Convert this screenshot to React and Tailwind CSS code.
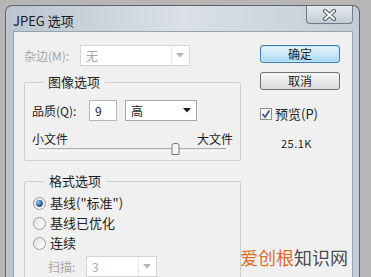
import React from 'react';

const font = { fontFamily: '"Noto Sans CJK SC", "Liberation Sans", sans-serif' };

// small down-pointing triangle used by the combo boxes
const Arrow = ({ color = '#1a1a1a' }) => (
  <svg width="8" height="5" viewBox="0 0 8 5">
    <path d="M0 0 H8 L4 4.5 Z" fill={color} />
  </svg>
);

const Combo = ({ value, disabled, className }) => (
  <div
    className={`flex items-center justify-between h-[21px] pl-[5px] pr-[5px] border bg-white ${
      disabled ? 'border-[#d4d4d4] text-[#a6a6a6]' : 'border-[#a9a9a9] text-[#1e1e1e]'
    } ${className}`}
  >
    <span className="text-[12px] leading-none">{value}</span>
    <div className={`flex items-center h-full pl-[4px] ${disabled ? 'border-l border-[#e6e6e6]' : ''}`}>
      <Arrow color={disabled ? '#b5b5b5' : '#1a1a1a'} />
    </div>
  </div>
);

const Radio = ({ checked }) => (
  <svg width="13" height="13" viewBox="0 0 13 13">
    <defs>
      <linearGradient id="rg" x1="0" y1="0" x2="1" y2="1">
        <stop offset="0" stopColor="#e0e0e0" />
        <stop offset="1" stopColor="#ffffff" />
      </linearGradient>
      <radialGradient id="rd" cx="0.35" cy="0.35" r="0.7">
        <stop offset="0" stopColor="#9fd0ef" />
        <stop offset="0.6" stopColor="#2f6ea3" />
        <stop offset="1" stopColor="#1c4c78" />
      </radialGradient>
    </defs>
    <circle cx="6.5" cy="6.5" r="6" fill="url(#rg)" stroke="#9a9a9a" strokeWidth="1" />
    {checked && <circle cx="6.5" cy="6.5" r="3.4" fill="url(#rd)" />}
  </svg>
);

const Legend = ({ children }) => (
  <legend className="ml-[11px] px-[5px] text-[13px] leading-[16px] text-[#1e1e1e]">{children}</legend>
);

export default function App() {
  return (
    <div className="relative w-[371px] h-[277px] overflow-hidden bg-[#b6b6b6]" style={font}>
      {/* window */}
      <div className="mt-[5px] ml-[5px] w-[355px] h-[272px] flex flex-col rounded-t-[7px] border border-b-0 border-[#5a6672] bg-linear-to-r from-[#bac5d0] via-[#dae0e6] to-[#c3ccd6]">
        {/* title bar */}
        <div className="h-[27px] flex items-start justify-between">
          <span className="pl-[7px] pt-[7px] text-[13px] leading-[16px] text-[#1a1a1a]">JPEG 选项</span>
          <div className="mr-[6px] w-[47px] h-[18px] flex items-center justify-center rounded-b-[4px] border border-t-0 border-[#6f7b88] bg-linear-to-b from-[#e6eaee] to-[#c2cbd4]">
            <svg width="15" height="12" viewBox="0 0 15 12">
              <path d="M3 2 L12 10 M12 2 L3 10" stroke="#4f5a66" strokeWidth="4.2" strokeLinecap="round" />
              <path d="M3 2 L12 10 M12 2 L3 10" stroke="#ffffff" strokeWidth="2.2" strokeLinecap="round" />
            </svg>
          </div>
        </div>

        {/* client area */}
        <div className="ml-[7px] mr-[6px] flex-1 flex border border-b-0 border-[#98a3ae] bg-[#f0f0f0] pl-[10px]">
          {/* left column */}
          <div className="w-[217px] flex flex-col">
            <div className="mt-[13px] flex items-center">
              <span className="w-[56px] text-[12px] leading-none text-[#a6a6a6]">杂边(M):</span>
              <Combo value="无" disabled className="w-[110px]" />
            </div>

            <fieldset className="mt-[8px] border border-[#cfcfcf] rounded-[2px] pl-[7px] pr-[7px] pb-[6px]">
              <Legend>图像选项</Legend>
              <div className="mt-[10px] flex items-center">
                <span className="w-[57px] text-[12px] leading-none text-[#1e1e1e]">品质(Q):</span>
                <div className="w-[28px] h-[21px] flex items-center pl-[5px] border border-[#b5b5b5] bg-white text-[12px] text-[#1e1e1e]">9</div>
                <Combo value="高" className="ml-[8px] w-[72px]" />
              </div>
              <div className="mt-[12px] flex justify-between text-[12px] leading-[12px] text-[#1e1e1e]">
                <span>小文件</span>
                <span>大文件</span>
              </div>
              <div className="mx-[7px] h-[9px] flex items-center">
                <div className="relative w-full h-[3px] border-t border-[#b0b0b0] border-b border-b-white bg-[#e4e4e4]">
                  <svg className="absolute left-[132px] top-[-6px]" width="9" height="12" viewBox="0 0 9 12">
                    <path d="M1 2.5 Q1 0.5 3 0.5 H6 Q8 0.5 8 2.5 V11.5 H1 Z" fill="#f4f4f4" stroke="#7a7a7a" />
                  </svg>
                </div>
              </div>
            </fieldset>

            <fieldset className="mt-[12px] flex-1 border border-b-0 border-[#cfcfcf] rounded-t-[2px] pl-[8px]">
              <Legend>格式选项</Legend>
              <div className="mt-[4px] h-[20px] flex items-center gap-[4px] text-[13px] text-[#1e1e1e]">
                <Radio checked />
                <span>基线("标准")</span>
              </div>
              <div className="h-[20px] flex items-center gap-[4px] text-[13px] text-[#1e1e1e]">
                <Radio />
                <span>基线已优化</span>
              </div>
              <div className="h-[20px] flex items-center gap-[4px] text-[13px] text-[#1e1e1e]">
                <Radio />
                <span>连续</span>
              </div>
              <div className="mt-[3px] ml-[15px] flex items-center">
                <span className="w-[38px] text-[12px] leading-none text-[#a6a6a6]">扫描:</span>
                <Combo value="3" disabled className="w-[71px]" />
              </div>
            </fieldset>
          </div>

          {/* right column */}
          <div className="ml-[19px] w-[80px] flex flex-col">
            <button className="mt-[13px] h-[18px] rounded-[3px] border border-[#3c7fb1] bg-linear-to-b from-[#e8f5fc] to-[#a8d8f2] text-[12px] leading-none text-[#1e1e1e] shadow-[inset_0_0_0_1px_#c2e6f8]">
              确定
            </button>
            <button className="mt-[9px] h-[18px] rounded-[3px] border border-[#707070] bg-linear-to-b from-[#f6f6f6] to-[#dcdcdc] text-[12px] leading-none text-[#1e1e1e]">
              取消
            </button>
            <div className="mt-[16px] flex items-center gap-[3px]">
              <svg width="12" height="12" viewBox="0 0 12 12">
                <rect x="0.5" y="0.5" width="11" height="11" fill="#f7f7f7" stroke="#8e8f8f" />
                <path d="M2.5 6 L5 9 L9.5 2.5" fill="none" stroke="#3a5a8c" strokeWidth="1.8" />
              </svg>
              <span className="text-[13px] leading-[16px] text-[#1e1e1e]">预览(P)</span>
            </div>
            <span className="mt-[14px] pl-[21px] text-[11px] leading-[14px] text-[#1e1e1e] tracking-[0.5px]">25.1K</span>
          </div>
        </div>
      </div>

      {/* watermark */}
      <div className="absolute left-[240px] top-[246px] text-[18px] leading-[22px] [text-shadow:0_0_2px_#ffffff]">
        <span className="text-[#dd6a28]">爱创根</span>
        <span className="text-[#4a4a4a]">知识网</span>
      </div>
    </div>
  );
}
